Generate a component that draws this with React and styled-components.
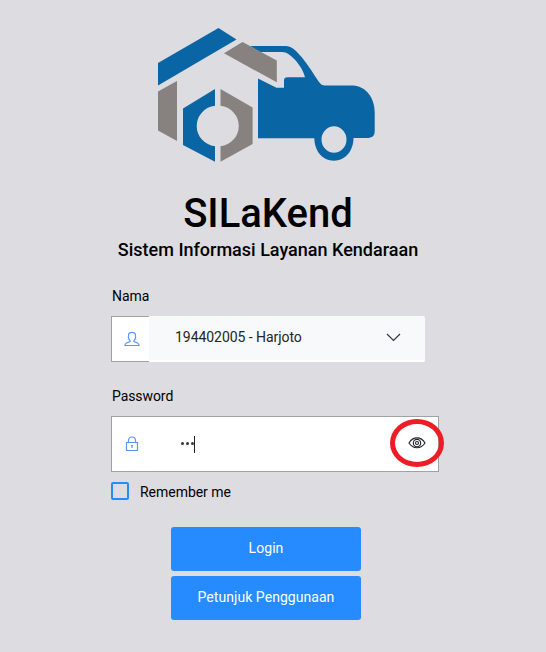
import React from "react";
import styled, { createGlobalStyle } from "styled-components";

const GlobalStyle = createGlobalStyle`
  * { box-sizing: border-box; }
  body {
    margin: 0;
    background: #dddce1;
    font-family: Roboto, "Liberation Sans", sans-serif;
    font-size: 14px;
    color: #000;
  }
`;

const Page = styled.main`
  height: 652px;
  padding-top: 24px;
  overflow: hidden;
`;

const Logo = styled.svg`
  display: block;
  width: 226px;
  height: 142px;
  margin-left: 154px;
`;

const Title = styled.h1`
  margin: 24px 0 0;
  padding-right: 10px;
  font-size: 40px;
  line-height: 48px;
  font-weight: 500;
  text-align: center;
`;

const Subtitle = styled.h2`
  margin: 1px 0 0;
  padding-right: 10px;
  font-size: 18px;
  line-height: 22px;
  font-weight: 500;
  text-align: center;
`;

const Form = styled.form`
  width: 328px;
  margin: 25px 0 0 111px;
`;

const Label = styled.label`
  display: block;
  height: 20px;
  margin-bottom: 10px;
  padding-left: 1px;
  line-height: 20px;
  letter-spacing: -0.08px;
`;

const SelectField = styled.div`
  display: flex;
  width: 314px;
  height: 46px;
  margin-bottom: 24px;
`;

const IconBox = styled.div`
  width: 38px;
  padding: 14px 0 0 12px;
  background: #fff;
  border: 1px solid #a0a0a5;
  border-right: 0;
`;

const SelectBox = styled.div`
  display: flex;
  flex: 1;
  align-items: center;
  justify-content: space-between;
  padding: 0 24px 3px 26px;
  color: #212529;
  letter-spacing: -0.05px;
  background: #f8f9fb;
  border-bottom: 2px solid #fff;
  border-radius: 0 2px 2px 0;
`;

const PasswordField = styled.div`
  display: flex;
  align-items: center;
  height: 56px;
  padding: 0 12px;
  background: #fff;
  border: 1px solid #a0a0a5;
`;

const Value = styled.div`
  display: flex;
  flex: 1;
  align-items: center;
  gap: 2px;
  height: 18px;
  margin-left: 41px;
`;

const Dot = styled.span`
  width: 3px;
  height: 3px;
  margin-bottom: 2px;
  border-radius: 50%;
  background: #35393d;
`;

const Caret = styled.span`
  width: 1px;
  height: 17px;
  margin: 1px 0 0 -2px;
  background: #222;
`;

const Reveal = styled.div`
  position: relative;
  width: 18px;
  height: 14px;
  margin-bottom: 3px;
`;

const Highlight = styled.span`
  position: absolute;
  left: -18px;
  top: -17px;
  width: 54px;
  height: 48px;
  border: 5px solid #ee1c25;
  border-radius: 50%;
`;

const Icon = styled.svg`
  display: block;
  fill: none;
  stroke: ${(p) => p.$color};
  stroke-width: ${(p) => p.$weight || 1};
`;

const Remember = styled.div`
  display: flex;
  align-items: center;
  gap: 11px;
  height: 20px;
  margin-top: 9px;
  line-height: 20px;

  span + span {
    padding-top: 1px;
    letter-spacing: -0.03px;
  }
`;

const Checkbox = styled.span`
  width: 18px;
  height: 18px;
  border: 2px solid #268bff;
  border-radius: 2px;
`;

const Actions = styled.div`
  display: flex;
  flex-direction: column;
  gap: 5px;
  width: 190px;
  margin: 26px 0 0 60px;
`;

const Button = styled.button`
  height: 44px;
  padding: 0 0 2px;
  color: #fff;
  background: #268bff;
  border: 0;
  border-radius: 3px;
  font: 400 14px Roboto, "Liberation Sans", sans-serif;
  letter-spacing: 0.05px;
`;

function VehicleLogo() {
  return (
    <Logo viewBox="154 24 226 142" aria-label="SILaKend">
      <g fill="#0965a4">
        <path d="M158 63L218.500 28L236.500 39.500L158 85.500Z" />
        <path d="M215 89L183 108.500V145L215 161.700V146.200A20.300 20.300 0 0 1 215 105.800Z" />
        <path
          fillRule="evenodd"
          d="M250 46H285C293 46 297 52 302 57.500C309 66 314 75 319 82C321 84.500 322 85.500 326 85.500H353C366 86 374.700 98 374.700 112V131C374.700 136 372 138 367 138H353.500C353.500 151 345 160.700 334 160.700C322.500 160.700 314.500 151 314.300 138.300H258V78.500L276.500 87.700H284V80.500Q284 77.200 287.500 77.200H305C303 69 296 59 288 53.700Q286 52 282 52H260ZM334 126.300A12.500 13.200 0 1 0 334 152.700A12.500 13.200 0 1 0 334 126.300Z"
        />
      </g>
      <g fill="#87827f">
        <path d="M224 53.300L242.500 42L276.800 60.500V82.300Z" />
        <path d="M158 91.500L177 81V141L158 130.500Z" />
        <path d="M220.500 89L252.600 107.500V144L220.500 161.700V146.200A20.300 20.300 0 0 0 220.500 105.800Z" />
      </g>
    </Logo>
  );
}

export default function App() {
  return (
    <>
      <GlobalStyle />
      <Page>
        <VehicleLogo />
        <Title>SILaKend</Title>
        <Subtitle>Sistem Informasi Layanan Kendaraan</Subtitle>
        <Form>
          <Label>Nama</Label>
          <SelectField>
            <IconBox>
              <Icon width="16" height="16" viewBox="0 0 16 16" $color="#5796fa" $weight="1.200">
                <path d="M6 9.500C4 8 4.300 5.500 4.600 3.500C5 .7 11 .7 11.400 3.500C11.700 5.500 12 8 10 9.500V10.500L13.500 12Q15 12.700 15 14.500H1Q1 12.700 2.500 12L6 10.500Z" />
              </Icon>
            </IconBox>
            <SelectBox>
              <span>194402005 - Harjoto</span>
              <Icon width="15" height="10" viewBox="0 0 15 10" $color="#33373b" $weight="1.200">
                <path d="M1 2L7.500 8.500L14 2" />
              </Icon>
            </SelectBox>
          </SelectField>
          <Label>Password</Label>
          <PasswordField>
            <Icon width="16" height="16" viewBox="0 0 16 16" $color="#5796fa" $weight="1.200">
              <path d="M2.500 6.500H13.500V14.500H2.500ZM4.500 6.500V4.500C4.500 -.2 11.500 -.2 11.500 4.500V6.500M8 9V12M7 9.500H9" />
            </Icon>
            <Value>
              <Dot />
              <Dot />
              <Dot />
              <Caret />
            </Value>
            <Reveal>
              <Icon width="18" height="14" viewBox="0 0 18 14" $color="#20252a" $weight="1.150">
                <path d="M1 7C5 .2 13 .2 17 7C13 13.300 5 13.300 1 7Z" />
                <circle cx="9" cy="7" r="3.700" />
                <circle cx="9" cy="7" r="1.500" />
              </Icon>
              <Highlight />
            </Reveal>
          </PasswordField>
          <Remember>
            <Checkbox />
            <span>Remember me</span>
          </Remember>
          <Actions>
            <Button type="button">Login</Button>
            <Button type="button">Petunjuk Penggunaan</Button>
          </Actions>
        </Form>
      </Page>
    </>
  );
}
